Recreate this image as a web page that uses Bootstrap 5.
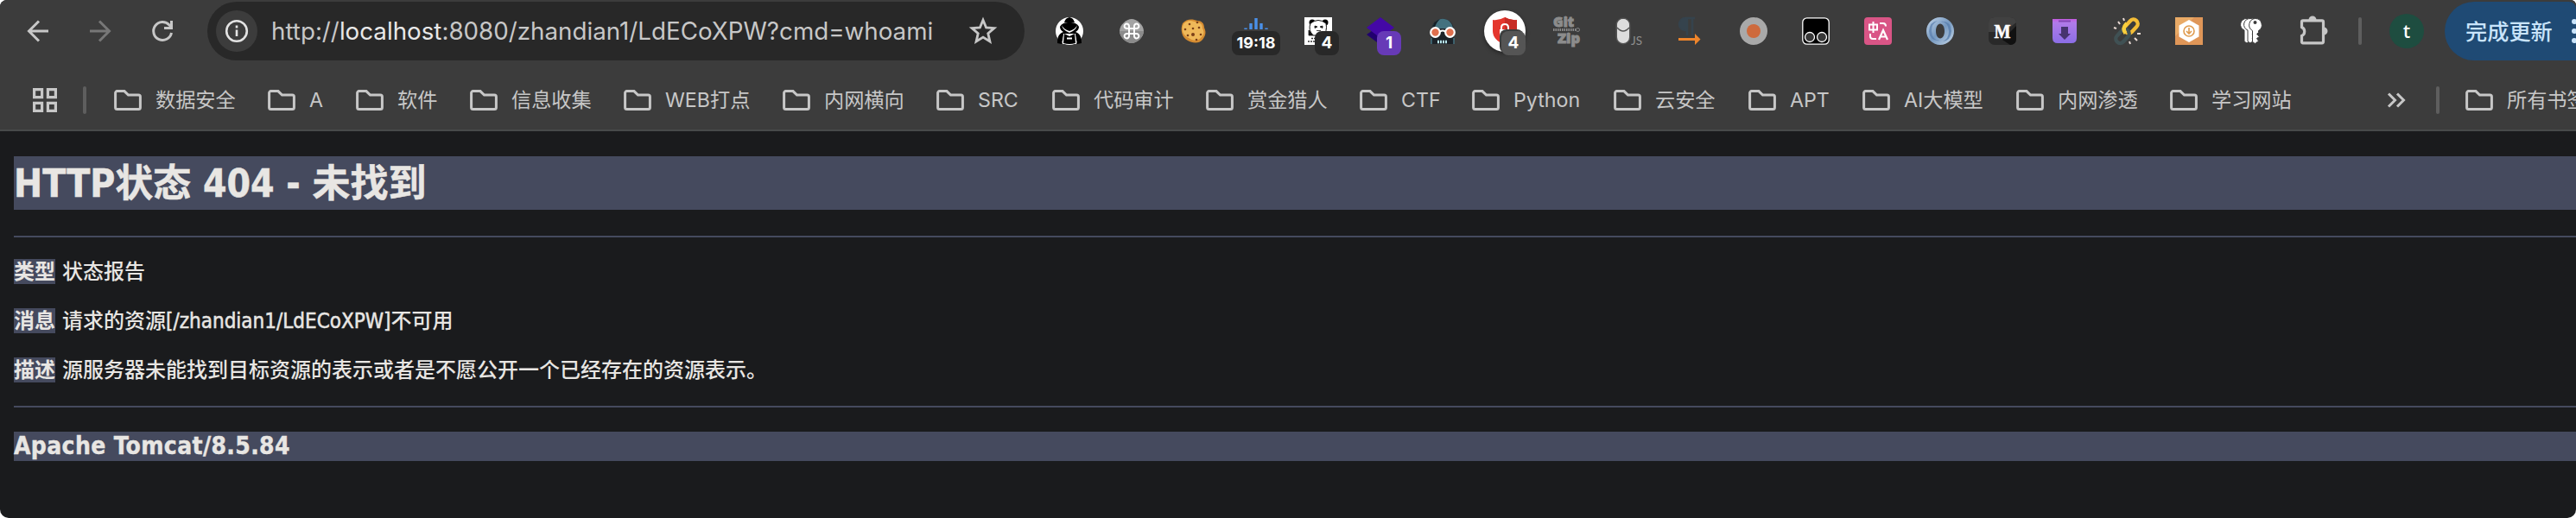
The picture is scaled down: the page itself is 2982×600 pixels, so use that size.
<!DOCTYPE html>
<html lang="zh-CN">
<head>
<meta charset="utf-8">
<title>HTTP状态 404 - 未找到</title>
<link href="https://cdn.jsdelivr.net/npm/bootstrap@5.3.0/dist/css/bootstrap.min.css" rel="stylesheet">
<style>
html,body{margin:0;background:#fff}
body{width:2982px;height:600px;overflow:hidden;font-family:Inter,"Noto Sans CJK SC",sans-serif}
.win{width:2982px;height:600px;border-radius:8px 6px 10px 10px;background:#1a1b1d;overflow:hidden}
.chrome{height:152px;background:#3c3c3c;border-bottom:2px solid #474a4a;color:#c7c7c7}
.toolbar{height:72px;padding-left:8px}
.cell{width:72px;height:72px;flex:none;display:flex;align-items:center;justify-content:center;position:relative}
.cell svg{overflow:visible;display:block}
.line{fill:none;stroke:#c7c7c7;stroke-width:3}
.dim{stroke:#777}
.omni{width:946px;height:68px;margin-left:16px;border-radius:34px;background:#282828;padding:0 24px 0 10px;flex:none}
.info{width:48px;height:48px;border-radius:50%;background:#3c3c3c}
.url{font:27.75px/40px Inter,sans-serif;white-space:nowrap;margin-left:16px;color:#c7c7c7}
.url b{font-weight:400;color:#e8e8e8}
.exts{margin-left:16px}
.tag{position:absolute;height:28px;border-radius:8px;background:#282828;color:#fff;font:700 19px/28px Inter,sans-serif;text-align:center;left:32px;top:36px;width:28px}
.clock{left:8px;width:56px;font-size:18px}
.purple{background:#673ab7}
.gray{background:#555;box-shadow:-2px -2px 0 #3c3c3c}
.round{width:48px;height:48px;border-radius:50%;background:#fff;box-shadow:0 2px 5px #0006}
.vline{width:4px;height:32px;border-radius:2px;background:#5e5e5e;flex:none}
.avatar{width:40px;height:40px;border-radius:50%;background:#1e4d40;color:#fff;font:500 22px/38px "Noto Sans",sans-serif;text-align:center;margin-left:32px;flex:none}
.update{width:152px;height:68px;border-radius:34px 8px 0 34px;background:#1f4a74;color:#c9e4fb;font:500 25.2px/66px "Noto Sans CJK SC",sans-serif;padding-left:24px;margin-left:24px;flex:none;white-space:nowrap;overflow:hidden;position:relative}
.update svg{position:absolute;left:146px;top:18px}
.marks{height:78px;padding-top:10px;display:grid;grid-template-columns:132px 178px 102px 132px 178px 184px 178px 134px 178px 178px 130px 164px 156px 132px 178px 178px 250px 58px 34px 128px;font:23.2px/36px Inter,"Noto Sans CJK SC",sans-serif;align-items:start}
.marks>div{display:flex;align-items:center;height:68px;white-space:nowrap}
.marks .fold{gap:16px}
.marks svg{flex:none}
.page404{padding:29px 0 0 16px;color:#e8e6e3;font-family:"DejaVu Sans Condensed","Noto Sans CJK SC",sans-serif}
.page404 h1,.page404 h3,.page404 b{background:#454a5e;color:#e8e6e3;font-weight:700}
.page404 h1{font-size:44px;line-height:60px;height:62px;padding-top:2px;margin:0 0 30px;-webkit-text-stroke:.5px #e8e6e3}
.page404 hr{height:2px;border:0;margin:0;background:#454a5e;opacity:1}
.page404 p{font-size:24px;line-height:31px;height:29px;margin:0 0 28px;white-space:nowrap}
.page404 p b{display:inline-block;height:29px;vertical-align:top;margin-right:8px}
.page404 h3{font-size:28px;line-height:34px;height:34px;margin:28px 0 0;letter-spacing:.36px;-webkit-text-stroke:.4px #e8e6e3}
.cjk5{font-weight:500}
.lat{-webkit-text-stroke:.5px #e8e6e3}
</style>
</head>
<body>
<svg width="0" height="0" class="position-absolute"><defs>
<symbol id="folder" viewBox="0 0 32 24"><path d="M1.600 3.600a2 2 0 0 1 2-2H12l4.500 4.400h11.900a2 2 0 0 1 2 2v12.400a2 2 0 0 1-2 2H3.600a2 2 0 0 1-2-2z" fill="none" stroke="#c7c7c7" stroke-width="3"/></symbol>
<linearGradient id="blue" x1="0" y1="0" x2="1" y2="1"><stop stop-color="#c3d6ea"/><stop offset=".5" stop-color="#7699c0"/><stop offset="1" stop-color="#c6d7e8"/></linearGradient>
<linearGradient id="vio" x1="0" y1="0" x2="0" y2="1"><stop stop-color="#c45be0"/><stop offset=".15" stop-color="#b07be8"/><stop offset="1" stop-color="#8b6ee6"/></linearGradient>
</defs></svg>
<main class="win">
<header class="chrome">
<div class="toolbar d-flex align-items-center">
<div class="cell"><svg width="32" height="32"><path class="line" d="M28 16H6M17 4.500 5.500 16 17 27.500"/></svg></div>
<div class="cell"><svg width="32" height="32"><path class="line dim" d="M4 16h22M15 4.500 26.500 16 15 27.500"/></svg></div>
<div class="cell"><svg width="32" height="32"><path class="line" d="M26.500 18A10.500 10.500 0 1 1 24 9l3 3"/><path d="M28 4v10H18v-3h7V4z" fill="#c7c7c7"/></svg></div>
<div class="omni d-flex align-items-center">
<div class="info d-flex align-items-center justify-content-center"><svg width="28" height="28"><circle cx="14" cy="14" r="11.800" fill="none" stroke="#e3e3e3" stroke-width="2.600"/><path d="M14 12.500v7.500M14 7.500v3" stroke="#e3e3e3" stroke-width="2.600"/></svg></div>
<div class="url">http://<b>localhost</b>:8080/zhandian1/LdECoXPW?cmd=whoami</div>
<svg class="ms-auto" width="48" height="48" viewBox="-24 -24 48 48"><path d="M0-14 3.800-4.800 13.500-4 6.100 2.400 8.300 12 0 6.900-8.300 12-6.100 2.400-13.500-4-3.800-4.800z" transform="translate(0 .5) scale(.95)" fill="none" stroke="#c7c7c7" stroke-width="3"/></svg>
</div>
<div class="exts d-flex">
<div class="cell"><svg width="32" height="32"><circle cx="16" cy="16" r="16" fill="#fff"/><path d="M16 0c4 1 5 3 6 6H10c1-3 2-5 6-6zM5 11c2-4 6-5 11-5s9 1 11 5c0 3-2 5-4 6 5 2 7 5 7 13l-5 1-2-10H9L7 31l-5-1c0-8 2-11 7-13-2-1-4-3-4-6z" fill="#000"/><path d="M7 9q2 5 9 7 7-2 9-7-1 6-9 9-8-3-9-9zM9 19h14l1 12H8z" fill="#fff"/><path d="m10 19 6 3 6-3 1 11q-7 2-14 0z" fill="#000"/><path d="M13 24.500h6" stroke="#fff" stroke-width="2"/></svg></div>
<div class="cell"><svg width="32" height="32"><path d="M16 2c6 0 14 7 14 14s-8 14-14 14S2 23 2 16 10 2 16 2" fill="#a4a4a4"/><path d="M2 16h28c0 7-8 14-14 14S2 23 2 16" fill="#8b8b8b"/><path d="M13 13h6v6h-6zM13 13h-2.500A2.700 2.700 0 1 1 13 10.500zM19 13v-2.500A2.700 2.700 0 1 1 21.500 13zM19 19h2.500A2.700 2.700 0 1 1 19 21.500zM13 19v2.500A2.700 2.700 0 1 1 10.500 19z" fill="none" stroke="#fff" stroke-width="2"/></svg></div>
<div class="cell"><svg width="32" height="32"><path d="M3 7c5-6 12-5 17-3 5 0 8 3 8 8 3 6 1 10-2 14-4 5-12 4-17 1C2 24 0 14 3 7z" fill="#d68d32"/><path d="M4 8c5-6 11-4 15-2 5 0 7 2 7 7 3 5 1 8-2 11-4 4-10 3-14 0C3 21 1 14 4 8z" fill="#efb859"/><g fill="#7b3f18"><circle cx="11" cy="8" r="1.300"/><circle cx="20" cy="6" r="1.300"/><circle cx="15" cy="13" r="1.300"/><circle cx="22" cy="12" r="1.300"/><circle cx="6" cy="14" r="1.300"/><circle cx="15" cy="20" r="2"/><circle cx="9" cy="21" r="1.300"/><circle cx="24" cy="20" r="1.300"/><circle cx="19" cy="26" r="1.300"/></g></svg></div>
<div class="cell"><svg width="32" height="32"><path d="M4 14v-1.500M10 14V7M16 14V1M22 14V7M28 14v-1.500" stroke="#4a90e8" stroke-width="3.400"/></svg><div class="tag clock">19:18</div></div>
<div class="cell"><svg width="32" height="32"><path fill="#fff" d="M0 0h32v32H0z"/><circle cx="9" cy="6" r="3.500"/><circle cx="24" cy="6" r="3.500"/><path d="M7 7q9-7 18 0 2 10-4 14H10Q4 15 7 7" fill="#fff" stroke="#111" stroke-width="1"/><path d="M12 10l3 1-3 1.500zM21 10l-3 1 3 1.500zM14 15.500h5M5 15l5 6H5z" fill="#111" stroke="#111" stroke-width=".8"/><path d="M8 24.500h9M4 28h13" stroke="#333" stroke-width="1.600" stroke-dasharray="2 1"/></svg><div class="tag">4</div></div>
<div class="cell"><svg width="32" height="32"><path d="M0 20 16 9l16 11-16 12z" fill="#21006f"/><path d="M0 12 16 0l16 12-16 12z" fill="#4408a6"/></svg><div class="tag purple">1</div></div>
<div class="cell"><svg width="32" height="32"><path d="M3 31V16C3-3 29-3 29 16v15z" fill="#1c2228"/><path d="M4 13C6-2 26-2 28 13z" fill="#43717f"/><path d="M4 12Q6 4 13 2 8 7 7 12z" fill="#162027"/><g fill="#e0704f" stroke="#fff" stroke-width="2.200"><circle cx="7.500" cy="17.500" r="5.300"/><circle cx="24.500" cy="17.500" r="5.300"/><path d="M13 16.500q3-2 6 0" fill="none"/></g><path d="M10 28.500h12" stroke="#b8e7ee" stroke-width="3.500" stroke-dasharray="2 1"/><path d="M3 24v7M29 24v7" stroke="#43717f" stroke-width="1.500"/></svg></div>
<div class="cell"><div class="round d-flex align-items-center justify-content-center"><svg width="32" height="32"><path d="M16 0q7 4 14 3v13q0 10-14 16Q2 26 2 16V3q7 1 14-3" fill="#e4362d"/><path d="M16 0q7 4 14 3v13q0 10-14 16z" fill="#c72c25"/><path d="M10 14h12v9H10z" fill="#fff"/><path d="M12 14v-2q0-4 4-4t4 4v2" fill="none" stroke="#fff" stroke-width="2"/></svg></div><div class="tag gray">4</div></div>
<div class="cell"><svg width="34" height="34" font-family="Noto Sans" font-weight="900" fill="#8c8c8c" stroke="#8c8c8c" stroke-width=".9"><text x="1" y="12" font-size="15" textLength="24" lengthAdjust="spacingAndGlyphs">Git</text><text x="6" y="30.500" font-size="15" textLength="26" lengthAdjust="spacingAndGlyphs">Zip</text><path d="M1 15.500h26" stroke-width="3" stroke-dasharray="1.500 1"/><circle cx="29.500" cy="15.500" r="2" fill="none"/></svg></div>
<div class="cell"><svg width="32" height="32"><rect x=".5" y=".5" width="17" height="31" rx="8.500" fill="#555"/><rect x="2" y="2" width="14" height="28" rx="7" fill="#ddd"/><circle cx="9" cy="9" r="7" fill="#ddd"/><path d="M2 12q7 8 14 0" fill="none" stroke="#555" stroke-width="1.600"/><text x="18" y="31.500" font-family="Lato" font-size="13.500" fill="#8f8f8f">JS</text></svg></div>
<div class="cell"><svg width="32" height="32"><path d="M20 1H9a7 7 0 0 0 0 14h2v6M17 1v20M11 1v14" fill="none" stroke="#35434d" stroke-width="2.500"/><path d="M9 1a7 7 0 0 0 0 14h2V1z" fill="#35434d"/><path d="M1 24h19v-5l6.500 6.500L20 32v-5H1z" fill="#ef852b"/></svg></div>
<div class="cell"><svg width="32" height="32"><circle cx="16" cy="16" r="16" fill="#a9a9a9"/><circle cx="16" cy="16" r="8" fill="#ce6a3d"/></svg></div>
<div class="cell"><svg width="32" height="32"><rect x=".8" y=".8" width="30.400" height="30.400" rx="5" fill="#000" stroke="#fff" stroke-width="1.300"/><g fill="#383838" stroke="#fff" stroke-width="1.300"><circle cx="9" cy="23" r="5.500"/><circle cx="23" cy="23" r="5.500"/></g></svg></div>
<div class="cell"><svg width="32" height="32"><rect width="32" height="32" rx="4" fill="#d95586"/><path d="M6 8.500h9v6H6zM10.500 5v13M18 7h4q3 0 3 3.500M7 19v3q0 3 3 3h4" fill="none" stroke="#fff" stroke-width="2"/><path d="M17 26l5-11 5 11M19 22.500h6" fill="none" stroke="#fff" stroke-width="2.200"/></svg></div>
<div class="cell"><svg width="32" height="32"><path fill-rule="evenodd" d="M16 0a16 16 0 1 1 0 32 16 16 0 0 1 0-32zM16 7.500c-3 0-5 4-5 8.500s2 8.500 5 8.500 5-4 5-8.500-2-8.500-5-8.500z" fill="url(#blue)"/><path d="M13 5.500Q25 3 26 16q0 9-7 12 9-1 10-12Q28 2 13 5.500z" fill="#587ead" opacity=".8"/><path d="M19 26.500Q7 29 6 16q0-9 7-12Q4 5 3 16q1 14 16 10.500z" fill="#587ead" opacity=".7"/></svg></div>
<div class="cell"><svg width="32" height="32"><rect width="32" height="32" rx="7" fill="#292929"/><path d="M7 0h18q6 0 7 6L18 17H0V7q0-7 7-7" fill="#414141"/><path d="M16 26 32 10v15q0 7-7 7z" fill="#111"/><text x="16" y="24" text-anchor="middle" font-family="Liberation Serif" font-weight="700" font-size="24" fill="#fff" stroke="#fff" stroke-width=".6" textLength="19" lengthAdjust="spacingAndGlyphs">M</text></svg></div>
<div class="cell"><svg width="32" height="32"><path d="M2 2h28v22q0 6-6 6H8q-6 0-6-6z" fill="url(#vio)"/><path d="M9 4.500h14" stroke="#8249b5" stroke-width="2"/><path d="M12 11h8v8h3l-7 7-7-7h3z" fill="#46346e"/></svg></div>
<div class="cell"><svg width="32" height="32" fill="none"><rect x="-9" y="-5" width="18" height="10" rx="5" transform="translate(21 10.500) rotate(-48)" stroke="#f4bd36" stroke-width="4.400"/><rect x="-9" y="-5" width="18" height="10" rx="5" transform="translate(11 22) rotate(-48)" stroke="#405154" stroke-width="4.400"/><path d="M14.500 18.500Q10 13 16 7" stroke="#f9cf3d" stroke-width="4.500"/><path d="M6 5l2 3M12 1l1 3M1 12l3 1M19 28l1 3M25 24l3 3M28 19h4" stroke="#eadbd5" stroke-width="2"/></svg></div>
<div class="cell"><svg width="32" height="32"><path fill="#df9658" d="M0 0h32v32H0z"/><path fill="#e9aa66" d="M0 0h22L0 22z"/><path d="m16 3 11.500 6.500v13L16 29 4.500 22.500v-13z" fill="#fff"/><circle cx="16" cy="16" r="6" fill="none" stroke="#df9b4f" stroke-width="1.600"/><path d="M16 12v7m-3-3 3 3 3-3" fill="none" stroke="#df9b4f" stroke-width="1.600"/></svg></div>
<div class="cell"><svg width="32" height="32" fill="#fff" stroke="#3c3c3c" stroke-width="1"><path d="M12 1.500a7 7 0 0 0-3 13.500v13l3 2 4-3-2-3 2-2-2-3 2-2v-2A7 7 0 0 0 12 1.500z" transform="translate(-1)"/><path d="M12 1.500a7 7 0 0 0-3 13.500v13l3 2 4-3-2-3 2-2-2-3 2-2v-2A7 7 0 0 0 12 1.500z" transform="translate(3)"/><path d="M13 1.500a7.500 7.500 0 0 0-3 14v13l3 2 4-3-2-3 3-2-3-3 2-2v-2A7.500 7.500 0 0 0 13 1.500z" transform="translate(7.500)"/><circle cx="20.500" cy="6" r="2" fill="#3c3c3c" stroke="none"/></svg></div>
<div class="cell"><svg width="32" height="32"><path d="M4 3.800h22q1.500 0 1.500 1.500v23q0 1.500-1.500 1.500H4q-1.500 0-1.500-1.500V21.500a5.500 5.500 0 0 0 0-10v-6Q2.500 3.800 4 3.800z" fill="none" stroke="#c7c7c7" stroke-width="3.200"/><path d="M10.500 3a4.500 4.500 0 0 1 9 0zM28 11.500a4.500 4.500 0 0 1 0 9z" fill="#c7c7c7"/></svg></div>
</div>
<div class="vline ms-3"></div>
<div class="avatar">t</div>
<div class="update">完成更新<svg width="8" height="34" fill="#c9e4fb"><circle cx="4" cy="5" r="3"/><circle cx="4" cy="16" r="3"/><circle cx="4" cy="27" r="3"/></svg></div>
</div>
<nav class="marks">
<div><svg style="margin-left:38px" width="28" height="28" fill="none" stroke="#c7c7c7" stroke-width="3.200"><path d="M1.600 1.600h9v9h-9zM17.400 1.600h9v9h-9zM1.600 17.400h9v9h-9zM17.400 17.400h9v9h-9z"/></svg><span class="vline" style="margin-left:30px"></span></div>
<div class="fold"><svg width="32" height="24"><use href="#folder"/></svg>数据安全</div>
<div class="fold"><svg width="32" height="24"><use href="#folder"/></svg>A</div>
<div class="fold"><svg width="32" height="24"><use href="#folder"/></svg>软件</div>
<div class="fold"><svg width="32" height="24"><use href="#folder"/></svg>信息收集</div>
<div class="fold"><svg width="32" height="24"><use href="#folder"/></svg>WEB打点</div>
<div class="fold"><svg width="32" height="24"><use href="#folder"/></svg>内网横向</div>
<div class="fold"><svg width="32" height="24"><use href="#folder"/></svg>SRC</div>
<div class="fold"><svg width="32" height="24"><use href="#folder"/></svg>代码审计</div>
<div class="fold"><svg width="32" height="24"><use href="#folder"/></svg>赏金猎人</div>
<div class="fold"><svg width="32" height="24"><use href="#folder"/></svg>CTF</div>
<div class="fold"><svg width="32" height="24"><use href="#folder"/></svg>Python</div>
<div class="fold"><svg width="32" height="24"><use href="#folder"/></svg>云安全</div>
<div class="fold"><svg width="32" height="24"><use href="#folder"/></svg>APT</div>
<div class="fold"><svg width="32" height="24"><use href="#folder"/></svg>AI大模型</div>
<div class="fold"><svg width="32" height="24"><use href="#folder"/></svg>内网渗透</div>
<div class="fold"><svg width="32" height="24"><use href="#folder"/></svg>学习网站</div>
<div><svg width="24" height="20"><path class="line" d="m3 2.500 7.500 7.500L3 17.500M13 2.500l7.500 7.500-7.500 7.500"/></svg></div>
<div><span class="vline"></span></div>
<div class="fold"><svg width="32" height="24"><use href="#folder"/></svg>所有书签</div>
</nav>
</header>
<section class="page404">
<h1>HTTP状态 404 - 未找到</h1>
<hr>
<div style="height:25px"></div>
<p><b>类型</b><span class="cjk5">状态报告</span></p>
<p><b>消息</b><span class="cjk5">请求的资源<span class="lat">[/zhandian1/LdECoXPW]</span>不可用</span></p>
<p class="mb-0"><b>描述</b><span class="cjk5">源服务器未能找到目标资源的表示或者是不愿公开一个已经存在的资源表示。</span></p>
<div style="height:27px"></div>
<hr>
<h3>Apache Tomcat/8.5.84</h3>
</section>
</main>
<script src="https://cdn.jsdelivr.net/npm/bootstrap@5.3.0/dist/js/bootstrap.bundle.min.js"></script>
</body>
</html>
